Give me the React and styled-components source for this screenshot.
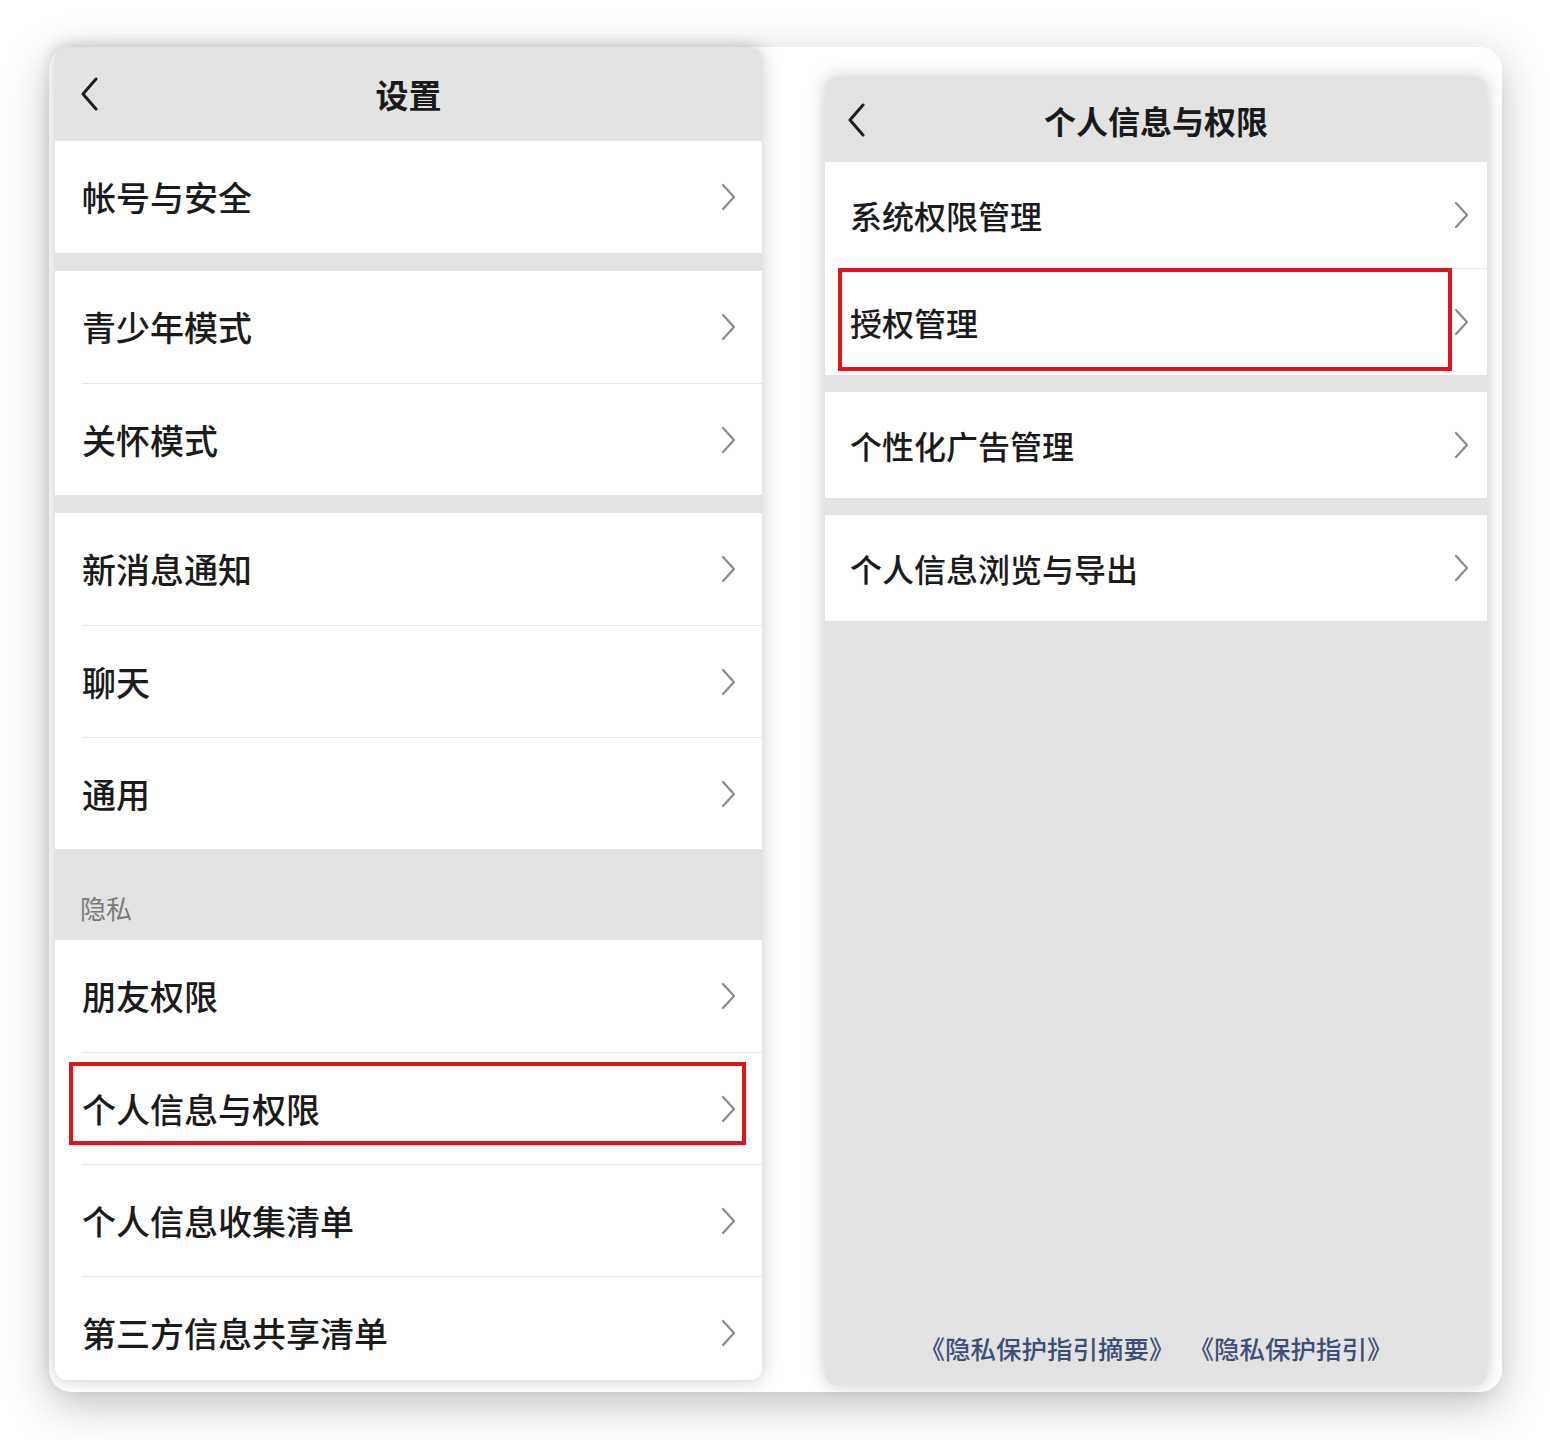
import React from "react";
import styled, { createGlobalStyle } from "styled-components";

const GlobalStyle = createGlobalStyle`
  body {
    margin: 0;
    background: #ffffff;
    font-family: "Noto Sans CJK SC", "Noto Sans", sans-serif;
  }
`;

const Page = styled.div`
  width: 1550px;
  height: 1440px;
  box-sizing: border-box;
  padding: 47px 0 0 49px;
`;

const Frame = styled.div`
  width: 1453px;
  height: 1345px;
  box-sizing: border-box;
  padding-left: 6px;
  background: #ffffff;
  border-radius: 22px;
  box-shadow: 0 12px 44px rgba(0, 0, 0, 0.26);
  display: flex;
  align-items: flex-start;
`;

const Panel = styled.div`
  width: ${(p) => p.$w}px;
  height: ${(p) => p.$h}px;
  margin-top: ${(p) => p.$top || 0}px;
  margin-left: ${(p) => p.$left || 0}px;
  background: #e3e3e3;
  border-radius: 12px;
  overflow: hidden;
  box-shadow: 0 0 18px rgba(0, 0, 0, 0.22);
  display: flex;
  flex-direction: column;
  flex-shrink: 0;
`;

const Header = styled.div`
  height: ${(p) => p.$h}px;
  flex-shrink: 0;
  display: grid;
  grid-template-columns: 1fr auto 1fr;
  align-items: center;
  padding: 0 ${(p) => p.$pad}px;
`;

const Title = styled.div`
  font-size: ${(p) => p.$size}px;
  font-weight: 700;
  color: #1a1a1a;
  line-height: 1;
`;

const Back = styled.div`
  display: flex;
  align-items: center;
`;

const Group = styled.div`
  background: #ffffff;
  flex-shrink: 0;
`;

const Gap = styled.div`
  height: ${(p) => p.$h}px;
  flex-shrink: 0;
`;

const Row = styled.div`
  position: relative;
  height: ${(p) => p.$h}px;
  display: flex;
  align-items: center;
  justify-content: space-between;
  padding: 0 ${(p) => p.$right}px 0 ${(p) => p.$left}px;
`;

const Label = styled.span`
  font-size: ${(p) => p.$size}px;
  font-weight: 500;
  color: #1b1b1b;
  line-height: 1;
`;

const Divider = styled.div`
  height: 1px;
  margin-left: ${(p) => p.$inset}px;
  background: #e7e7e7;
`;

const SectionTitle = styled.div`
  height: ${(p) => p.$h}px;
  flex-shrink: 0;
  display: flex;
  align-items: flex-end;
  padding: 0 0 14px 25px;
  box-sizing: border-box;
  font-size: 26px;
  color: #7a7a7a;
`;

const Highlight = styled.div`
  position: absolute;
  left: ${(p) => p.$x}px;
  top: ${(p) => p.$y}px;
  width: ${(p) => p.$w}px;
  height: ${(p) => p.$h}px;
  box-sizing: border-box;
  border: 4px solid #e3121c;
  pointer-events: none;
`;

const Spacer = styled.div`
  flex: 1;
`;

const Footer = styled.div`
  display: flex;
  justify-content: center;
  gap: 14px;
  padding-bottom: 25px;
  font-size: 25.5px;
  font-weight: 500;
  line-height: 1;
  color: #3f4e78;
`;

const Chevron = () => (
  <svg width="16" height="28" viewBox="0 0 16 28">
    <polyline
      points="2,2 13,14 2,26"
      fill="none"
      stroke="#8b8b8b"
      strokeWidth="2.2"
      strokeLinecap="round"
      strokeLinejoin="round"
    />
  </svg>
);

const BackArrow = () => (
  <svg width="19" height="34" viewBox="0 0 19 34">
    <polyline
      points="16,2 3,17 16,32"
      fill="none"
      stroke="#1e1e1e"
      strokeWidth="3"
      strokeLinecap="round"
      strokeLinejoin="round"
    />
  </svg>
);

const leftGroups = [
  { items: ["帐号与安全"] },
  { items: ["青少年模式", "关怀模式"] },
  { items: ["新消息通知", "聊天", "通用"] },
  { section: "隐私", items: ["朋友权限", "个人信息与权限", "个人信息收集清单", "第三方信息共享清单"] },
];

const rightGroups = [
  ["系统权限管理", "授权管理"],
  ["个性化广告管理"],
  ["个人信息浏览与导出"],
];

const App = () => {
  return (
    <>
      <GlobalStyle />
      <Page>
        <Frame>
          <Panel $w={707} $h={1333}>
            <Header $h={94} $pad={25}>
              <Back>
                <BackArrow />
              </Back>
              <Title $size={33}>设置</Title>
              <div />
            </Header>
            {leftGroups.map((group, gi) => (
              <React.Fragment key={gi}>
                {group.section ? (
                  <SectionTitle $h={91}>{group.section}</SectionTitle>
                ) : (
                  gi > 0 && <Gap $h={18} />
                )}
                <Group>
                  {group.items.map((item, i) => (
                    <React.Fragment key={item}>
                      {i > 0 && <Divider $inset={27} />}
                      <Row $h={i > 0 ? 111 : 112} $left={27} $right={25}>
                        <Label $size={34}>{item}</Label>
                        <Chevron />
                        {item === "个人信息与权限" && (
                          <Highlight $x={14} $y={9} $w={677} $h={83} />
                        )}
                      </Row>
                    </React.Fragment>
                  ))}
                </Group>
              </React.Fragment>
            ))}
          </Panel>

          <Panel $w={662} $h={1308} $top={30} $left={63}>
            <Header $h={85} $pad={22}>
              <Back>
                <BackArrow />
              </Back>
              <Title $size={32}>个人信息与权限</Title>
              <div />
            </Header>
            {rightGroups.map((items, gi) => (
              <React.Fragment key={gi}>
                {gi > 0 && <Gap $h={17} />}
                <Group>
                  {items.map((item, i) => (
                    <React.Fragment key={item}>
                      {i > 0 && <Divider $inset={25} />}
                      <Row $h={106} $left={25} $right={17}>
                        <Label $size={32}>{item}</Label>
                        <Chevron />
                        {item === "授权管理" && (
                          <Highlight $x={13} $y={-1} $w={614} $h={103} />
                        )}
                      </Row>
                    </React.Fragment>
                  ))}
                </Group>
              </React.Fragment>
            ))}
            <Spacer />
            <Footer>
              <span>《隐私保护指引摘要》</span>
              <span>《隐私保护指引》</span>
            </Footer>
          </Panel>
        </Frame>
      </Page>
    </>
  );
};

export default App;
